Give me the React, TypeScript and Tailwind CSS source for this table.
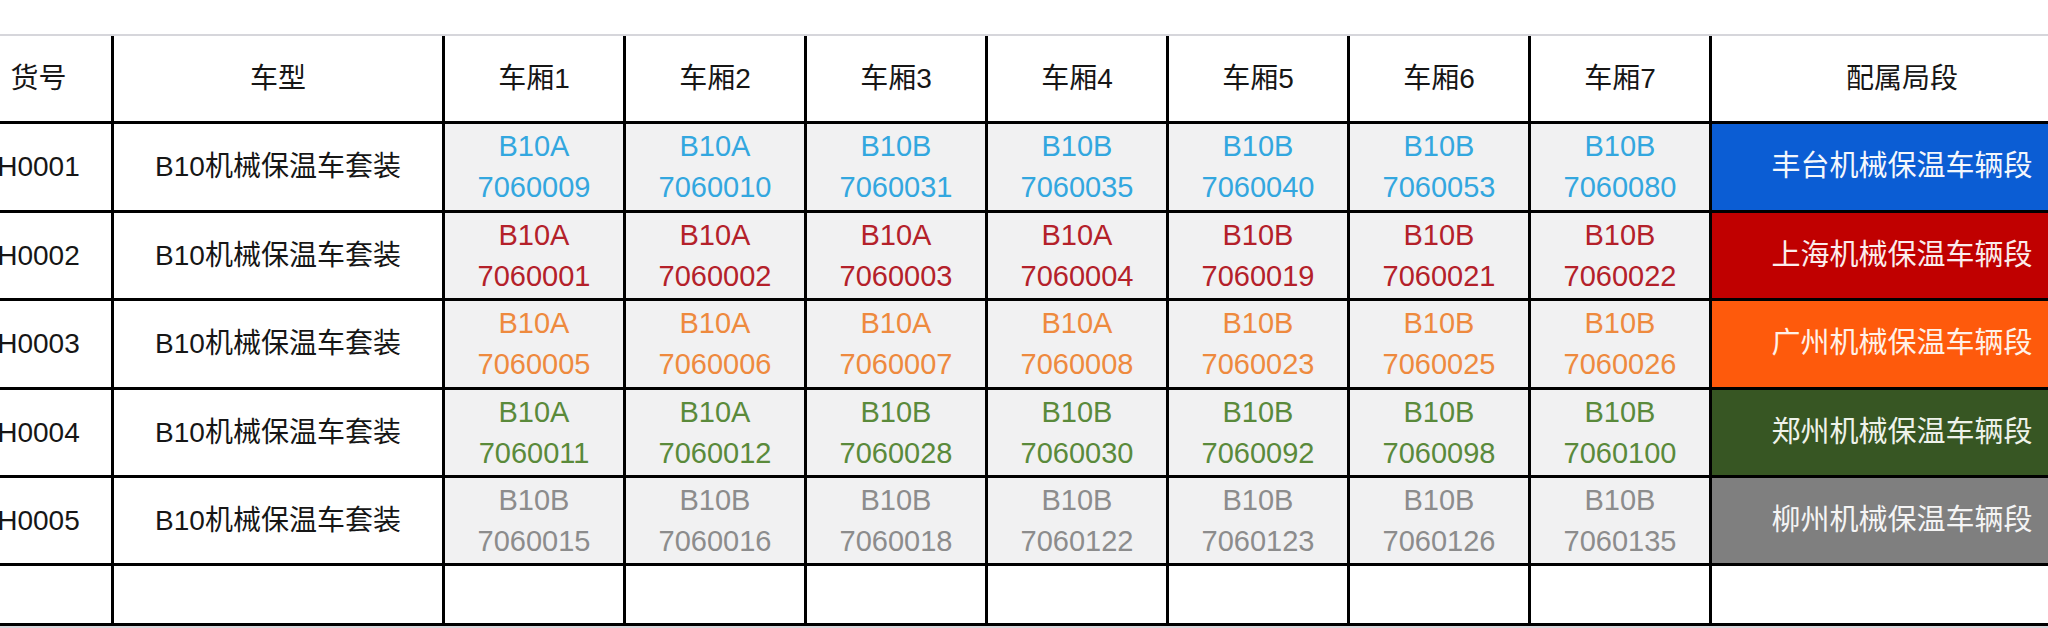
import React from 'react';

type Car = { model: string; no: string };

const cols = ['车厢1', '车厢2', '车厢3', '车厢4', '车厢5', '车厢6', '车厢7'];

const rows: {
  id: string;
  text: string;
  cell: string;
  depot: string;
  depotBg: string;
  cars: Car[];
}[] = [
  {
    id: 'H0001',
    text: 'text-[#33a7df]',
    cell: '丰台机械保温车辆段',
    depot: 'bg-[#0b5dd4]',
    depotBg: 'text-[#f4f7fc]',
    cars: [
      { model: 'B10A', no: '7060009' },
      { model: 'B10A', no: '7060010' },
      { model: 'B10B', no: '7060031' },
      { model: 'B10B', no: '7060035' },
      { model: 'B10B', no: '7060040' },
      { model: 'B10B', no: '7060053' },
      { model: 'B10B', no: '7060080' },
    ],
  },
  {
    id: 'H0002',
    text: 'text-[#b4212a]',
    cell: '上海机械保温车辆段',
    depot: 'bg-[#c00000]',
    depotBg: 'text-[#fbecec]',
    cars: [
      { model: 'B10A', no: '7060001' },
      { model: 'B10A', no: '7060002' },
      { model: 'B10A', no: '7060003' },
      { model: 'B10A', no: '7060004' },
      { model: 'B10B', no: '7060019' },
      { model: 'B10B', no: '7060021' },
      { model: 'B10B', no: '7060022' },
    ],
  },
  {
    id: 'H0003',
    text: 'text-[#ee8a3e]',
    cell: '广州机械保温车辆段',
    depot: 'bg-[#fe5a0c]',
    depotBg: 'text-[#fff1e8]',
    cars: [
      { model: 'B10A', no: '7060005' },
      { model: 'B10A', no: '7060006' },
      { model: 'B10A', no: '7060007' },
      { model: 'B10A', no: '7060008' },
      { model: 'B10B', no: '7060023' },
      { model: 'B10B', no: '7060025' },
      { model: 'B10B', no: '7060026' },
    ],
  },
  {
    id: 'H0004',
    text: 'text-[#5a8a3b]',
    cell: '郑州机械保温车辆段',
    depot: 'bg-[#375623]',
    depotBg: 'text-[#eef2ea]',
    cars: [
      { model: 'B10A', no: '7060011' },
      { model: 'B10A', no: '7060012' },
      { model: 'B10B', no: '7060028' },
      { model: 'B10B', no: '7060030' },
      { model: 'B10B', no: '7060092' },
      { model: 'B10B', no: '7060098' },
      { model: 'B10B', no: '7060100' },
    ],
  },
  {
    id: 'H0005',
    text: 'text-[#8c8c8c]',
    cell: '柳州机械保温车辆段',
    depot: 'bg-[#7f7f7f]',
    depotBg: 'text-[#f4f4f4]',
    cars: [
      { model: 'B10B', no: '7060015' },
      { model: 'B10B', no: '7060016' },
      { model: 'B10B', no: '7060018' },
      { model: 'B10B', no: '7060122' },
      { model: 'B10B', no: '7060123' },
      { model: 'B10B', no: '7060126' },
      { model: 'B10B', no: '7060135' },
    ],
  },
];

export default function App() {
  return (
    <div className="w-[2048px] h-[628px] overflow-hidden bg-white font-['Liberation_Sans','Noto_Sans_CJK_SC',sans-serif] text-[#161616]">
      <div className="h-[34px]" />
      <div className="h-[2px] bg-[#d6d6db]" />
      <div className="ml-[-34px] w-max grid grid-cols-[145px_328px_repeat(7,178px)_380px] grid-rows-[85px_86px_85px_86px_85px_85px_57px] gap-[3px] bg-black border-b-[3px] border-black">
        {/* 表头 */}
        <div className="bg-white flex items-center justify-center text-[28px]">货号</div>
        <div className="bg-white flex items-center justify-center text-[28px]">车型</div>
        {cols.map((c) => (
          <div key={c} className="bg-white flex items-center justify-center text-[28px]">
            {c}
          </div>
        ))}
        <div className="bg-white flex items-center justify-center text-[28px]">配属局段</div>

        {rows.map((r) => (
          <React.Fragment key={r.id}>
            <div className="bg-white flex items-center justify-center text-[28px]">{r.id}</div>
            <div className="bg-white flex items-center justify-center text-[28px]">B10机械保温车套装</div>
            {r.cars.map((car, i) => (
              <div
                key={i}
                className={`bg-[#f1f1f2] flex flex-col items-center justify-center text-[29px] leading-[41px] ${r.text}`}
              >
                <span>{car.model}</span>
                <span>{car.no}</span>
              </div>
            ))}
            <div className={`${r.depot} ${r.depotBg} flex items-center justify-center text-[29px]`}>
              {r.cell}
            </div>
          </React.Fragment>
        ))}

        {/* 空行 */}
        {Array.from({ length: 10 }).map((_, i) => (
          <div key={i} className="bg-white" />
        ))}
      </div>
      <div className="h-[2px] bg-[#d6d6db]" />
    </div>
  );
}
